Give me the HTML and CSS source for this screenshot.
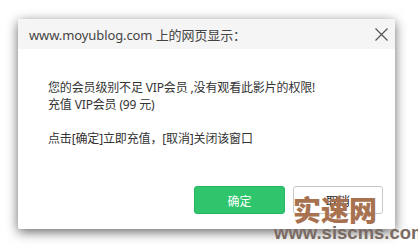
FILE: index.html
```html
<!DOCTYPE html>
<html lang="zh">
<head>
<meta charset="utf-8">
<link rel="stylesheet" href="styles.css">
</head>
<body>
<div class="stage">
  <div class="dialog">
    <div class="header">
      <span class="title">www.moyublog.com 上的网页显示：</span>
      <svg class="close" width="13" height="13" viewBox="0 0 13 13"><path d="M0.5 0.5 L12.5 12.5 M12.5 0.5 L0.5 12.5" stroke="#555" stroke-width="1.2" fill="none"/></svg>
    </div>
    <div class="body">
      <p>您的会员级别不足 VIP会员 ,没有观看此影片的权限!<br>充值 VIP会员 (99 元)<br><br>点击[确定]立即充值，[取消]关闭该窗口</p>
    </div>
    <div class="footer">
      <button class="btn ok">确定</button>
      <button class="btn cancel">取消</button>
    </div>
  </div>
  <div class="wm-big">实速网</div>
  <div class="wm-url">www.siscms.com</div>
</div>
</body>
</html>
```
FILE: styles.css
```css
html, body {
  margin: 0;
  padding: 0;
  background: #fff;
}
.stage {
  position: relative;
  width: 418px;
  height: 245px;
  padding: 19px 0 0 18px;
  box-sizing: border-box;
}
.dialog {
  width: 377px;
  height: 210px;
  background: #fff;
  border-radius: 2px;
  box-shadow: 0 3px 12px rgba(0,0,0,0.6);
  display: flex;
  flex-direction: column;
  font-family: "Noto Sans", "Noto Sans CJK SC", sans-serif;
  color: #333;
}
.header {
  height: 30px;
  background: #f5f5f5;
  display: flex;
  align-items: center;
  justify-content: space-between;
  padding: 0 7px 0 11px;
  border-radius: 2px 2px 0 0;
}
.title {
  font-size: 13px;
  color: #444;
  letter-spacing: -0.1px;
}
.close {
  display: block;
  margin-top: 1px;
}
.body {
  flex: 1;
  padding: 30px 0 0 30px;
}
.body p {
  margin: 0;
  font-size: 12px;
  line-height: 17px;
  color: #333;
  letter-spacing: -0.15px;
}
.footer {
  display: flex;
  justify-content: flex-end;
  gap: 8px;
  padding: 0 12px 15px 0;
}
.btn {
  width: 91px;
  height: 28px;
  border-radius: 3px;
  font-family: "Noto Sans CJK SC", sans-serif;
  font-size: 12px;
  padding: 0;
}
.ok {
  background: #2ec56d;
  border: 1px solid #27b563;
  color: #fff;
}
.cancel {
  width: 90px;
  background: #fff;
  border: 1px solid #c8c8c8;
  color: #222;
}
.wm-big {
  position: absolute;
  left: 293px;
  top: 189px;
  font-family: "Noto Sans CJK SC", sans-serif;
  font-weight: 900;
  font-size: 28px;
  line-height: 40px;
  color: #a8714f;
}
.wm-url {
  position: absolute;
  left: 274px;
  top: 224px;
  white-space: nowrap;
  font-family: "Liberation Sans", Arial, sans-serif;
  font-weight: bold;
  font-size: 18.5px;
  line-height: 18px;
  color: #7a6a62;
}
```
